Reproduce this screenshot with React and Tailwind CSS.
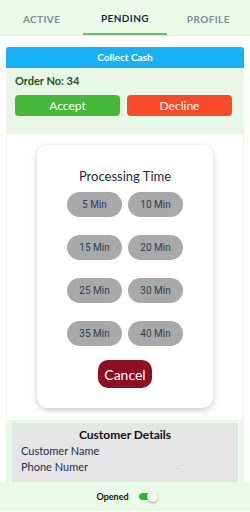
import React from "react";

const times = ["5 Min", "10 Min", "15 Min", "20 Min", "25 Min", "30 Min", "35 Min", "40 Min"];

export default function App() {
  return (
    <div className="w-[250px] h-[512px] flex flex-col overflow-hidden bg-white" style={{ fontFamily: "Lato, 'Noto Sans', sans-serif" }}>
      {/* Tabs */}
      <div className="h-[36px] shrink-0 bg-[#ebfbea] flex border-b border-[#e3efe3]">
        <div className="flex-1 flex items-center justify-center pt-[4px] text-[10px] font-bold tracking-[0.4px] text-[#7d8b96]">ACTIVE</div>
        <div className="flex-1 flex items-center justify-center pt-[4px] text-[10px] font-bold tracking-[0.4px] text-[#1d2a3a] border-b-2 border-[#5fc55b]">PENDING</div>
        <div className="flex-1 flex items-center justify-center pt-[4px] text-[10px] font-bold tracking-[0.4px] text-[#7d8b96]">PROFILE</div>
      </div>
      <div className="h-[11px] shrink-0" />
      {/* Order card */}
      <div className="mx-[6px] shrink-0">
        <div className="h-[21px] bg-[#19b1f6] rounded-t-[3px] flex items-center justify-center text-white text-[10px] font-bold">Collect Cash</div>
        <div className="h-[66px] bg-[#e8f8e6] px-[9px] pt-[6px]">
          <div className="text-[11px] font-bold text-[#1b561b] leading-[13px]">Order No: 34</div>
          <div className="mt-[8px] flex gap-[7px]">
            <div className="w-[105px] h-[21px] rounded-[4px] bg-[#46b93b] text-white text-[12px] flex items-center justify-center">Accept</div>
            <div className="w-[105px] h-[21px] rounded-[4px] bg-[#fb4a2b] text-white text-[12px] flex items-center justify-center">Decline</div>
          </div>
        </div>
      </div>
      {/* Panel with modal */}
      <div className="mx-[6px] h-[286px] shrink-0 border-x border-[#f0f0f0] pt-[11px]">
        <div className="mx-[30px] h-[263px] bg-white rounded-[11px] shadow-[0_2px_6px_rgba(0,0,0,0.22)] flex flex-col items-center pt-[23px]">
          <div className="text-[13px] text-[#1d2b4a] leading-[16px]">Processing Time</div>
          <div className="mt-[8px] grid grid-cols-2 gap-x-[6px] gap-y-[18px]">
            {times.map((t) => (
              <div key={t} className="w-[55px] h-[25px] rounded-full bg-[#a9a9a9] text-[#2c3d55] text-[10px] flex items-center justify-center" style={{ fontFamily: "Roboto, sans-serif" }}>{t}</div>
            ))}
          </div>
          <div className="mt-[14px] w-[54px] h-[28px] rounded-[10px] bg-[#8d0d23] text-white text-[14px] flex items-center justify-center">Cancel</div>
        </div>
      </div>
      {/* Customer details */}
      <div className="mx-[6px] h-[62px] shrink-0 bg-[#e9f9e7] px-[6px] pt-[3px]">
        <div className="h-[59px] bg-[#e5e5e5] pt-[4px] px-[9px]">
          <div className="text-center text-[12px] font-bold text-[#111] leading-[15px]">Customer Details</div>
          <div className="mt-[1px] text-[11px] text-[#1e2c55] leading-[16px]">Customer Name</div>
          <div className="text-[11px] text-[#1e2c55] leading-[16px] flex">
            <span>Phone Numer</span>
            <span className="ml-[90px] text-[#999] text-[6px]">.</span>
          </div>
        </div>
      </div>
      {/* Footer */}
      <div className="h-[29px] shrink-0 bg-[#ebfbea] flex items-center justify-center gap-[10px] pl-[4px]">
        <span className="text-[9px] font-bold text-[#111]">Opened</span>
        <div className="relative w-[19px] h-[11px]">
          <div className="absolute left-0 top-[2px] w-[16px] h-[7px] rounded-full bg-[#1fbf1f]" />
          <div className="absolute right-0 top-0 w-[11px] h-[11px] rounded-full bg-[#f5f5f5] shadow-[0_1px_2px_rgba(0,0,0,0.35)]" />
        </div>
      </div>
    </div>
  );
}
